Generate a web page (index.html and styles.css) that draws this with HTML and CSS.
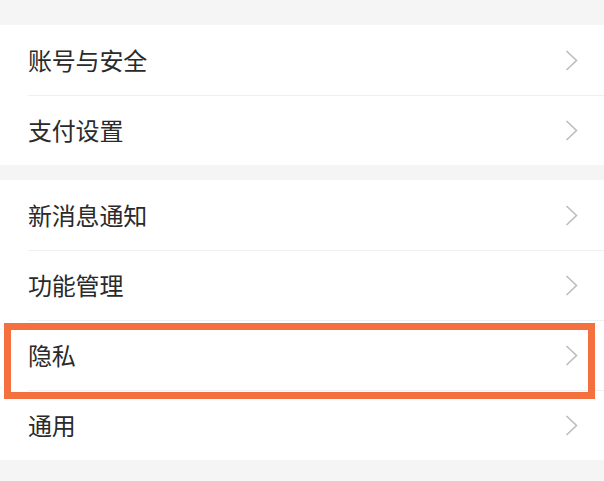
FILE: index.html
```html
<!DOCTYPE html>
<html lang="zh-CN">
<head>
<meta charset="utf-8">
<title>设置</title>
<link rel="stylesheet" href="styles.css">
</head>
<body>
<div class="page">
  <div class="gap gap-top"></div>
  <div class="group">
    <div class="row"><span class="label">账号与安全</span><svg class="chev" viewBox="0 0 13 21"><polyline points="1.5,1 11.5,10.5 1.5,20"/></svg></div>
    <div class="row"><span class="label">支付设置</span><svg class="chev" viewBox="0 0 13 21"><polyline points="1.5,1 11.5,10.5 1.5,20"/></svg></div>
  </div>
  <div class="gap gap-mid"></div>
  <div class="group">
    <div class="row"><span class="label">新消息通知</span><svg class="chev" viewBox="0 0 13 21"><polyline points="1.5,1 11.5,10.5 1.5,20"/></svg></div>
    <div class="row"><span class="label">功能管理</span><svg class="chev" viewBox="0 0 13 21"><polyline points="1.5,1 11.5,10.5 1.5,20"/></svg></div>
    <div class="row row-marked"><span class="label">隐私</span><svg class="chev" viewBox="0 0 13 21"><polyline points="1.5,1 11.5,10.5 1.5,20"/></svg><span class="mark"></span></div>
    <div class="row"><span class="label">通用</span><svg class="chev" viewBox="0 0 13 21"><polyline points="1.5,1 11.5,10.5 1.5,20"/></svg></div>
  </div>
  <div class="gap gap-bottom"></div>
</div>
</body>
</html>
```
FILE: styles.css
```css
html, body {
  margin: 0;
  padding: 0;
  background: #f5f5f5;
}
.page {
  width: 604px;
  height: 481px;
  overflow: hidden;
  display: flex;
  flex-direction: column;
  font-family: "Noto Sans CJK SC", "Noto Sans", sans-serif;
}
.gap { background: #f5f5f5; flex: none; }
.gap-top { height: 25px; }
.gap-mid { height: 15px; }
.gap-bottom { height: 21px; }
.group {
  background: #fff;
  display: flex;
  flex-direction: column;
}
.row {
  position: relative;
  height: 70px;
  display: flex;
  align-items: center;
  justify-content: space-between;
  padding: 0 26px 0 28px;
  box-sizing: border-box;
}
.row + .row::before {
  content: "";
  position: absolute;
  top: 0;
  left: 28px;
  right: 0;
  height: 1px;
  background: #f0f0f0;
}
.label {
  font-size: 24px;
  color: #2a2a2a;
  line-height: 1;
  letter-spacing: -0.2px;
}
.chev {
  width: 13px;
  height: 21px;
  fill: none;
  stroke: #bdbdbd;
  stroke-width: 1.6;
}
.mark {
  position: absolute;
  top: 3px;
  left: 4px;
  right: 9px;
  height: 76px;
  border: 7.5px solid #f5703f;
  box-sizing: border-box;
  z-index: 2;
}
```
